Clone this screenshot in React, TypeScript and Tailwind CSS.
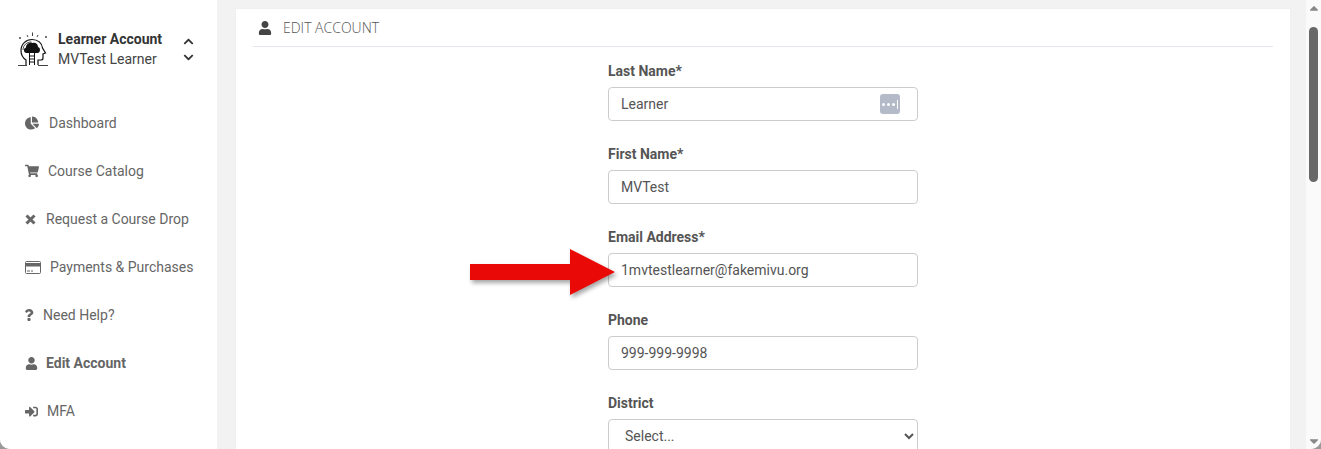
import { FaChartPie, FaShoppingCart, FaQuestion, FaUser, FaSignInAlt, FaChevronUp, FaChevronDown, FaCaretUp, FaCaretDown } from 'react-icons/fa';
import type { ReactNode } from 'react';

const CardIcon = () => (
  <svg width="16" height="13" viewBox="0 0 16 13" fill="none">
    <rect x="0.5" y="0.5" width="15" height="12" rx="1" stroke="#666" />
    <rect x="1" y="2" width="14" height="3.5" fill="#666" />
    <rect x="2" y="9.5" width="3" height="1" fill="#666" />
    <rect x="6" y="9.5" width="2" height="1" fill="#666" />
  </svg>
);

const CrossIcon = () => (
  <svg width="11" height="11" viewBox="0 0 11 11" fill="none" stroke="#666" strokeWidth="3">
    <path d="M1.500 1.500l8 8M9.500 1.500l-8 8" />
  </svg>
);

const HeadLogo = () => (
  <svg width="31" height="34" viewBox="0 0 31 34" fill="none" stroke="#111" strokeWidth="1.200">
    <path d="M8 33v-5c-3-2-5-5.500-5-9.500 0-6.500 5-11 11-11 6 0 10 3.500 10.500 8.500l3 5-2.500 1v4c0 1.500-1 2-2 2h-3v5" />
    <path d="M5 18c0-5 4-8 8.500-8" strokeWidth="0.8" />
    <path
      d="M8.500 21c-3 0-3.500-5-0.500-5.500 0-3.500 3.500-5.500 6.500-4.500 3-1 5.500 1 5.500 4 3 0.500 2.500 6-0.500 6z"
      fill="#111"
      stroke="none"
    />
    <path d="M11.500 20v13M16.500 20v13M11.500 24h5M11.500 27h5M11.500 30h5" strokeWidth="1" />
    <path d="M0 33.500h9M20 33.500h10M9 3l1 2M14.500 0.500v3.500M20 3l-1 2" strokeWidth="0.8" />
    <path d="M1 6h2M2 5v2M27 5h2M28 4v2" strokeWidth="0.7" />
  </svg>
);

const PasswordBadge = () => (
  <div className="absolute right-[18px] top-[7px] flex h-5 w-5 items-center justify-center gap-[2px] rounded-[3px] bg-[#b4bac8]">
    <span className="h-[3px] w-[3px] rounded-full bg-white" />
    <span className="h-[3px] w-[3px] rounded-full bg-white" />
    <span className="h-[3px] w-[3px] rounded-full bg-white" />
    <span className="h-[9px] w-[1px] bg-white" />
  </div>
);

const navItems: { label: string; icon: ReactNode; gap: string; active?: boolean }[] = [
  { label: 'Dashboard', icon: <FaChartPie size={14} />, gap: 'gap-[10px]' },
  { label: 'Course Catalog', icon: <FaShoppingCart size={14} />, gap: 'gap-[9px]' },
  { label: 'Request a Course Drop', icon: <CrossIcon />, gap: 'gap-[10px]' },
  { label: 'Payments & Purchases', icon: <CardIcon />, gap: 'gap-[9px]' },
  { label: 'Need Help?', icon: <FaQuestion size={12} className="-ml-[2px]" />, gap: 'gap-[8px]' },
  { label: 'Edit Account', icon: <FaUser size={13} />, gap: 'gap-[8px]', active: true },
  { label: 'MFA', icon: <FaSignInAlt size={13} />, gap: 'gap-[9px]' },
];

const fields = [
  { label: 'Last Name*', value: 'Learner', badge: true },
  { label: 'First Name*', value: 'MVTest' },
  { label: 'Email Address*', value: '1mvtestlearner@fakemivu.org' },
  { label: 'Phone', value: '999-999-9998' },
];

export default function App() {
  return (
    <div className="h-[449px] w-[1321px] overflow-hidden bg-[#9a9a9a] font-['Roboto',sans-serif]">
      <div className="relative flex h-full overflow-hidden rounded-b-[10px] bg-[#f2f2f2]">
        {/* Sidebar */}
        <aside className="h-full w-[217px] shrink-0 bg-white">
          <div className="flex items-center pl-[18px] pt-[29px]">
            <HeadLogo />
            <div className="ml-[9px] w-[125px] text-[14px] leading-[20px]">
              <div className="font-bold text-[#333]">Learner Account</div>
              <div className="text-[#444]">MVTest Learner</div>
            </div>
            <div className="flex flex-col gap-[5px] text-[#333]">
              <FaChevronUp size={11} />
              <FaChevronDown size={11} />
            </div>
          </div>
          <nav className="mt-[30px]">
            {navItems.map((item) => (
              <div
                key={item.label}
                className={`flex h-[48px] items-center pl-[25px] text-[14px] text-[#666] ${item.gap} ${
                  item.active ? 'font-bold' : ''
                }`}
              >
                {item.icon}
                <span>{item.label}</span>
              </div>
            ))}
          </nav>
        </aside>

        {/* Main content */}
        <main className="flex min-w-0 flex-1 pl-[18px] pr-[15px] pt-[8px]">
          <section className="h-[600px] w-full border border-[#f0f0f3] bg-white px-[17px]">
            <header className="flex h-[38px] items-center border-b border-[#e6e6ee] pl-[5px] text-[#444]">
              <FaUser size={14} />
              <h2 className="ml-[11px] font-['Open_Sans',sans-serif] text-[14px] font-light text-[#555]">
                EDIT ACCOUNT
              </h2>
            </header>
            <form className="mx-auto mt-[14px] w-[310px]">
              {fields.map((field) => (
                <div key={field.label} className="mb-[23px]">
                  <label className="block h-[20px] text-[14px] font-bold leading-[20px] text-[#555]">
                    {field.label}
                  </label>
                  <div className="relative mt-[6px]">
                    <input
                      readOnly
                      value={field.value}
                      className="block h-[34px] w-full rounded-[4px] border border-[#ccc] bg-white px-[12px] text-[14px] text-[#555]"
                    />
                    {field.badge && <PasswordBadge />}
                  </div>
                </div>
              ))}
              <label className="block h-[20px] text-[14px] font-bold leading-[20px] text-[#555]">District</label>
              <select className="mt-[6px] block h-[34px] w-full rounded-[4px] border border-[#ccc] bg-white px-[12px] text-[14px] text-[#555]">
                <option>Select...</option>
              </select>
            </form>
          </section>
        </main>

        {/* Scrollbar */}
        <div className="flex h-full w-[15px] shrink-0 flex-col items-center justify-between bg-[#fafafa] pb-[1px] pt-[1px] text-[#888]">
          <div className="flex flex-col items-center">
            <FaCaretUp size={14} />
            <div className="mt-[12px] h-[155px] w-[9px] rounded-full bg-[#686868]" />
          </div>
          <FaCaretDown size={14} />
        </div>

        {/* Red arrow callout */}
        <svg
          className="absolute left-[466px] top-[244px] drop-shadow-[2px_3px_2px_rgba(0,0,0,0.35)]"
          width="156"
          height="56"
          viewBox="0 0 156 56"
        >
          <path d="M4 20h100V5l45 23-45 23V36H4z" fill="#e90a07" />
        </svg>
      </div>
    </div>
  );
}
